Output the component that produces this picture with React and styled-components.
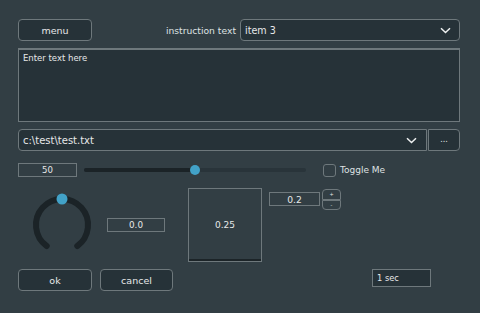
import React from "react";
import styled, { createGlobalStyle } from "styled-components";

const Global = createGlobalStyle`
  html, body { margin: 0; padding: 0; background: #323e44; }
  body { width: 480px; height: 313px; overflow: hidden; font-family: "DejaVu Sans", "Liberation Sans", sans-serif; font-size: 9.5px; color: #e6e8e9; }
`;

const Page = styled.div`
  width: 480px;
  height: 313px;
  box-sizing: border-box;
  padding: 19px 20px 0 18px;
  background: #323e44;
  display: flex;
  flex-direction: column;
`;

const Row = styled.div`
  display: flex;
  align-items: ${(p) => p.$align || "center"};
  gap: ${(p) => p.$gap || 0}px;
  margin-top: ${(p) => p.$mt || 0}px;
`;

const Button = styled.div`
  box-sizing: border-box;
  width: ${(p) => p.$w}px;
  height: ${(p) => p.$h || 22}px;
  border: 1px solid #6e787c;
  border-radius: 4px;
  background: #263238;
  display: flex;
  align-items: center;
  justify-content: center;
  color: #e6e8e9;
  font-size: 9.5px;
  margin-left: ${(p) => p.$ml || 0}px;
`;

const Label = styled.div`
  margin-left: auto;
  margin-right: 4px;
  color: #dfe2e3;
  font-size: 9.2px;
`;

const Combo = styled.div`
  box-sizing: border-box;
  width: ${(p) => p.$w}px;
  height: 22px;
  border: 1px solid #6e787c;
  border-radius: ${(p) => p.$radius || "4px"};
  background: #263238;
  display: flex;
  align-items: center;
  padding: 0 ${(p) => p.$pr || 8}px 0 4px;
  color: #e6e8e9;
  font-size: ${(p) => p.$fs || 9.6}px;
`;

const ComboText = styled.span`
  flex: 1;
`;

const TextArea = styled.div`
  box-sizing: border-box;
  height: 74px;
  margin-top: 7px;
  border: 1px solid #6e787c;
  border-top: 2px solid #6e787c;
  background: #263238;
  padding: 3px 4px;
  color: #e6e8e9;
  font-size: 8.5px;
`;

const Dots = styled.div`
  box-sizing: border-box;
  width: 32px;
  height: 22px;
  border: 1px solid #6e787c;
  border-radius: 0 4px 4px 0;
  background: #263238;
  display: flex;
  align-items: center;
  justify-content: center;
  padding-bottom: 1px;
  color: #e6e8e9;
  font-size: 8px;
`;

const ValueBox = styled.div`
  box-sizing: border-box;
  width: ${(p) => p.$w}px;
  height: ${(p) => p.$h || 14}px;
  border: 1px solid #6e787c;
  display: flex;
  align-items: center;
  justify-content: ${(p) => (p.$left ? "flex-start" : "center")};
  padding-left: ${(p) => (p.$left ? "4px" : "0")};
  background: ${(p) => (p.$dark ? "#263238" : "transparent")};
  margin-top: ${(p) => p.$mt || 0}px;
  margin-left: ${(p) => p.$ml || 0}px;
  color: #e6e8e9;
  font-size: ${(p) => p.$fs || 8.8}px;
`;

const Track = styled.div`
  position: relative;
  width: 222px;
  height: 4px;
  border-radius: 2px;
  background: #29343a;
  margin-left: 7px;
`;

const TrackFill = styled.div`
  height: 100%;
  border-radius: 2px;
  background: #1b2327;
`;

const Thumb = styled.div`
  position: absolute;
  top: -3px;
  width: 10px;
  height: 10px;
  margin-left: -5px;
  border-radius: 50%;
  background: #42a2c8;
`;

const Check = styled.div`
  box-sizing: border-box;
  width: 13px;
  height: 13px;
  border: 1px solid #6e787c;
  border-radius: 3px;
  margin-left: 17px;
`;

const CheckLabel = styled.span`
  margin-left: 4px;
  color: #dfe2e3;
  font-size: 9px;
`;

const Square = styled.div`
  box-sizing: border-box;
  width: 74px;
  height: 74px;
  border: 1px solid #6e787c;
  box-shadow: inset 0 -2px 0 #1c2428;
  display: flex;
  align-items: center;
  justify-content: center;
  font-size: 9px;
  margin-left: ${(p) => p.$ml}px;
`;

const Spinner = styled.div`
  box-sizing: border-box;
  width: 19px;
  height: 21px;
  margin-left: 2px;
  margin-top: 1px;
  display: flex;
  flex-direction: column;
`;

const SpinBtn = styled.div`
  flex: 1;
  box-sizing: border-box;
  border: 1px solid #6e787c;
  border-radius: ${(p) => (p.$top ? "4px 4px 0 0" : "0 0 4px 4px")};
  display: flex;
  align-items: center;
  justify-content: center;
  font-size: 5px;
  color: #e6e8e9;
`;

const Knob = () => {
  const cx = 44, cy = 37, r = 26;
  const a0 = -0.8 * Math.PI, a1 = 0.8 * Math.PI;
  const pt = (a) => [cx + r * Math.sin(a), cy - r * Math.cos(a)];
  const [x0, y0] = pt(a0);
  const [x1, y1] = pt(a1);
  return (
    <svg width="88" height="74" viewBox="0 0 88 74">
      <path
        d={`M ${x0} ${y0} A ${r} ${r} 0 1 1 ${x1} ${y1}`}
        fill="none"
        stroke="#1b2327"
        strokeWidth="6"
        strokeLinecap="round"
      />
      <circle cx={cx} cy={cy - r} r="5.5" fill="#42a2c8" />
    </svg>
  );
};

const Chevron = () => (
  <svg width="11" height="7" viewBox="0 0 11 7">
    <path d="M1 1.2 L5.5 5.5 L10 1.2" fill="none" stroke="#eef0f1" strokeWidth="1.5" />
  </svg>
);

export default function App() {
  return (
    <>
      <Global />
      <Page>
        <Row>
          <Button $w={74}>menu</Button>
          <Label>instruction text</Label>
          <Combo $w={220}>
            <ComboText>item 3</ComboText>
            <Chevron />
          </Combo>
        </Row>
        <TextArea>Enter text here</TextArea>
        <Row $mt={7} $gap={1}>
          <Combo $w={409} $radius="4px 0 0 4px" $fs={10} $pr={9}>
            <ComboText>c:\test\test.txt</ComboText>
            <Chevron />
          </Combo>
          <Dots>...</Dots>
        </Row>
        <Row $mt={12}>
          <ValueBox $w={59} $fs={8.6}>50</ValueBox>
          <Track>
            <TrackFill style={{ width: "50%" }} />
            <Thumb style={{ left: "50%" }} />
          </Track>
          <Check />
          <CheckLabel>Toggle Me</CheckLabel>
        </Row>
        <Row $mt={11} $align="flex-start">
          <Knob />
          <ValueBox $w={58} $mt={30} $ml={1}>0.0</ValueBox>
          <Square $ml={23}>0.25</Square>
          <ValueBox $w={51} $mt={4} $ml={7} $fs={9.2}>0.2</ValueBox>
          <Spinner>
            <SpinBtn $top>+</SpinBtn>
            <SpinBtn>-</SpinBtn>
          </Spinner>
        </Row>
        <Row $mt={7} $align="flex-start">
          <Button $w={74}>ok</Button>
          <Button $w={73} $ml={8}>cancel</Button>
          <ValueBox $w={59} $h={18} $dark $left $ml={199} $fs={8.3}>1 sec</ValueBox>
        </Row>
      </Page>
    </>
  );
}
